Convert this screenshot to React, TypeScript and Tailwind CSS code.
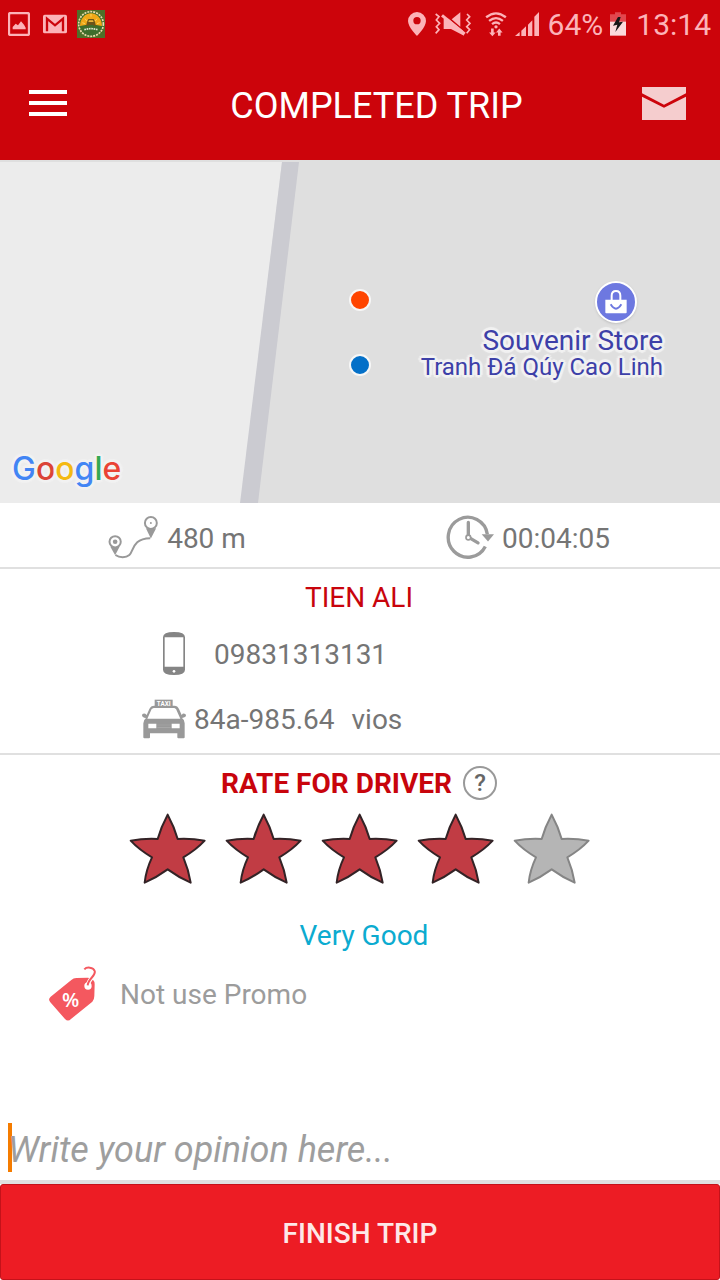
import { useState } from "react";

const RATINGS = ["Bad", "Poor", "Good", "Very Good", "Excellent"];
const HALO =
  "[text-shadow:0_0_3px_#f6f6f6,3px_0_1px_#f1f1f1,-3px_0_1px_#f1f1f1,0_3px_1px_#f1f1f1,0_-3px_1px_#f1f1f1,2px_2px_1px_#f1f1f1,-2px_-2px_1px_#f1f1f1,2px_-2px_1px_#f1f1f1,-2px_2px_1px_#f1f1f1]";

function StatusBar() {
  return (
    <div className="flex h-12 items-center justify-between pr-[9px] pl-2 text-[#fcb3b8]">
      <div className="flex items-center gap-[13px]">
        <svg viewBox="0 0 66 72" className="h-6 w-[22px]" fill="none">
          <rect x="3" y="3" width="60" height="66" rx="5" stroke="currentColor" strokeWidth="7" />
          <path d="M14 52V45l9-10 7 5 9-12 9 10 5 9v5z" fill="currentColor" />
        </svg>
        <svg viewBox="0 0 72 60" className="h-5 w-6">
          <rect y="2" width="72" height="56" rx="5" fill="currentColor" />
          <path d="M12 52V14l24 20 24-20v38" fill="none" stroke="#cc040b" strokeWidth="7" />
        </svg>
        <svg viewBox="0 0 84 84" className="-ml-[3px] h-7 w-7">
          <rect width="84" height="84" fill="#4f7029" />
          <circle cx="42" cy="42" r="37" fill="#3f6d2c" stroke="#ecdcae" strokeWidth="5" strokeDasharray="6 3" />
          <path d="M9 48a33 38 0 0 1 66 0q-33-8-66 0z" fill="#f0a818" />
          <path d="M24 26l6 8M42 12v8M60 26l-6 8M16 38l8 3M68 38l-8 3" stroke="#f8d25c" strokeWidth="3" />
          <path d="M28 44l2-8 4-9h16l4 9 2 8v4h-6v-3H34v3h-6z" fill="#6b541a" />
          <path d="M34 36l2-5h12l2 5z" fill="#e9b63d" />
          <path d="M22 59q20-6 40 0" fill="none" stroke="#dfe5cf" strokeWidth="5" strokeDasharray="5 2" />
        </svg>
      </div>
      <div className="flex items-center">
        <svg viewBox="54 36 54 72" className="h-6 w-[18px]">
          <path
            fillRule="evenodd"
            fill="currentColor"
            d="M81 36a27 27 0 0 1 27 27c0 18-27 45-27 45S54 81 54 63a27 27 0 0 1 27-27zm0 15a11 11 0 1 0 0 22 11 11 0 0 0 0-22z"
          />
        </svg>
        <svg viewBox="135 36 108 72" className="ml-[9px] h-6 w-9" fill="none">
          <path
            d="M137 42l10 8-8 10 10 10-10 10 8 9-10 11M231 42l8 8-9 10 10 10-10 10 9 9-9 11"
            stroke="currentColor"
            strokeWidth="5"
          />
          <path d="M185 58l26-21v43z" fill="currentColor" />
          <path d="M161 56h14l44 36 3 15-39-20h-22z" fill="currentColor" />
          <path d="M156 46l68 56" stroke="currentColor" strokeWidth="9" />
        </svg>
        <svg viewBox="284 34 66 76" className="ml-[14px] h-[25px] w-[22px]" fill="none">
          <path
            d="M287 50q30-24 60 0M296 61q21-17 42 0M305 71q12-10 24 0"
            stroke="currentColor"
            strokeWidth="7"
          />
          <circle cx="317" cy="79" r="5" fill="currentColor" />
          <path d="M302 84h8v12h6l-10 12-10-12h6zM323 106V96h-6l10-12 10 12h-6v10z" fill="currentColor" />
        </svg>
        <svg viewBox="372 36 72 72" className="ml-2 h-6 w-6">
          <path d="M372 108l14-12v12zM391 92l14-13v29h-14zM411 74l13-13v47h-13zM430 50l14-14v72h-14z" fill="currentColor" />
        </svg>
        <span className="ml-[9px] pt-[2px] text-[30px] leading-9">64%</span>
        <svg viewBox="660 38 48 70" className="ml-[7px] h-6 w-4">
          <path d="M660 44h15v-6h18v6h15v24h-48z" fill="#e2474e" />
          <path d="M660 66h48v42h-48z" fill="#fbdadc" />
          <path d="M684 52l-15 26 13-3-6 22 23-31-12 2 5-16z" fill="#161616" />
        </svg>
        <span className="ml-[10px] pt-[2px] text-[30px] leading-9">13:14</span>
      </div>
    </div>
  );
}

function TopBar() {
  return (
    <div className="flex h-28 items-center pr-[34px] pb-[2px] pl-[29px]">
      <button type="button" aria-label="Menu" className="flex w-[38px] flex-col gap-[7px]">
        <span className="h-1 w-full bg-white" />
        <span className="h-1 w-full bg-white" />
        <span className="h-1 w-full bg-white" />
      </button>
      <h1 className="flex-1 pt-[6px] pl-11 text-center text-4xl text-white">COMPLETED TRIP</h1>
      <button type="button" aria-label="Messages">
        <svg viewBox="0 0 132 99" className="h-[33px] w-11">
          <path d="M0 0h132v19L66 53 0 19z" fill="#f5cdce" />
          <path d="M0 29l66 33 66-33v70H0z" fill="#f5cdce" />
        </svg>
      </button>
    </div>
  );
}

function TripMap() {
  return (
    <section aria-label="Map" className="relative h-[343px] overflow-hidden bg-[#dfdfdf]">
      <svg viewBox="0 0 720 343" preserveAspectRatio="none" className="absolute inset-0 h-full w-full">
        <path d="M0 2h282l-41 341H0z" fill="#ececec" />
        <path d="M282 2h17l-41 341h-18z" fill="#cbcbd1" />
      </svg>
      <span className="absolute top-[129px] left-1/2 size-[22px] -translate-x-1/2 rounded-full border-2 border-[#f7f7f7] bg-[#ff4500]" />
      <span className="absolute top-[194px] left-1/2 size-[22px] -translate-x-1/2 rounded-full border-2 border-[#f7f7f7] bg-[#0470c8]" />
      <div className="absolute top-[121px] right-[57px] flex flex-col items-end text-[#3d40a8]">
        <span className="mr-[26px] flex size-[42px] items-center justify-center rounded-full border-2 border-white bg-[#6d78e0] shadow-sm">
          <svg viewBox="0 0 66 70" className="h-6 w-[22px]">
            <path d="M1 28h64v38q0 3-3 3H4q-3 0-3-3z" fill="#fff" />
            <path d="M20 30V16q0-14 13-14t13 14v14" fill="none" stroke="#fff" strokeWidth="6" />
            <path d="M17 42q16 26 32 0" fill="none" stroke="#6d78e0" strokeWidth="6" />
          </svg>
        </span>
        <span className={`mt-1 text-[28px] leading-7 ${HALO}`}>Souvenir Store</span>
        <span className={`text-2xl leading-6 ${HALO}`}>Tranh Đá Qúy Cao Linh</span>
      </div>
      <span className={`absolute bottom-[14px] left-3 font-[Inter,sans-serif] text-[32px] leading-10 font-medium ${HALO}`}>
        <span className="text-[#4285f4]">G</span>
        <span className="text-[#db4437]">o</span>
        <span className="text-[#f4b912]">o</span>
        <span className="text-[#4285f4]">g</span>
        <span className="text-[#34a853]">l</span>
        <span className="text-[#ea4335]">e</span>
      </span>
    </section>
  );
}

function TripStats() {
  return (
    <section className="grid h-[66px] grid-cols-2 border-b-2 border-[#e0e0e0] pt-1">
      <div className="flex items-center justify-center gap-[9px] pr-[6px]">
        <svg viewBox="324 256 150 130" className="h-[43px] w-[50px]" fill="none">
          <path d="M346 374c12 9 32 9 42 0 14-12 8-50 63-51" stroke="#999" strokeWidth="6" />
          <circle cx="345" cy="334" r="17" stroke="#999" strokeWidth="6" />
          <circle cx="345" cy="334" r="7" fill="#999" />
          <path d="M331 350h27l-13 25z" fill="#999" />
          <circle cx="453" cy="277" r="18" stroke="#999" strokeWidth="6" />
          <circle cx="453" cy="277" r="3" fill="#999" />
          <path d="M438 293h31l-16 31z" fill="#999" />
        </svg>
        <span className="pt-1">480 m</span>
      </div>
      <div className="flex items-center justify-center gap-2 pr-6">
        <svg viewBox="138 74 144 134" className="h-[45px] w-12" fill="none">
          <path d="M262 131a59 60 0 1 0-6 37" stroke="#9b9b9b" strokeWidth="10" />
          <path d="M245 131h37l-18 22z" fill="#9b9b9b" />
          <path d="M205 96v44l29 17" stroke="#9b9b9b" strokeWidth="10" strokeLinecap="round" />
          <circle cx="205" cy="141" r="7" fill="#fff" stroke="#9b9b9b" strokeWidth="5" />
        </svg>
        <span className="pt-1">00:04:05</span>
      </div>
    </section>
  );
}

function Driver() {
  return (
    <section className="h-[186px] border-b-2 border-[#e0e0e0]">
      <h2 className="flex h-14 items-center justify-center pt-[2px] pr-[2px] text-[#c8040c]">TIEN ALI</h2>
      <div className="flex h-14 items-center pl-[163px]">
        <svg viewBox="219 184 66 129" className="h-[43px] w-[22px]">
          <path
            fillRule="evenodd"
            fill="#858585"
            d="M219 200q0-16 33-16t33 16v97q0 16-33 16t-33-16zM224 200v88h56v-88z"
          />
          <circle cx="252" cy="302" r="4" fill="#fff" />
        </svg>
        <span className="pt-1 pl-[29px]">09831313131</span>
      </div>
      <div className="flex h-[72px] items-center gap-2 pt-[3px] pl-[142px]">
        <svg viewBox="156 384 132 120" className="h-10 w-11">
          <path d="M194 386h54v22h-54z" fill="#999" />
          <path
            fillRule="evenodd"
            fill="#999"
            d="M190 404h63q10 0 14 10l8 18 3-4q10-1 10 5t-12 8q8 5 8 16v42q0 3-3 3h-16q-3 0-3-3v-12h-82v12q0 3-3 3h-14q-3 0-3-3v-42q0-10 8-16-12-1-12-8t10-5l4 4 8-18q4-10 15-10zm1 7-6 3-13 29h99l-13-29-5-3zM175 458v14h24v-14zM245 458v14h24v-14z"
          />
          <path d="M202 461h40v2h-40zM202 468h40v2h-40z" fill="#adadad" />
          <text x="221" y="404" textAnchor="middle" fontSize="19" fontWeight="700" fill="#fff">
            TAXI
          </text>
        </svg>
        <span className="pt-[2px]">84a-985.64</span>
        <span className="pt-[2px] pl-[9px]">vios</span>
      </div>
    </section>
  );
}

function Rating() {
  const [rating, setRating] = useState(4);
  return (
    <section>
      <div className="flex h-14 items-center justify-center gap-[11px] pr-[2px] pb-px">
        <h2 className="pt-[2px] font-bold text-[#c8040c]">RATE FOR DRIVER</h2>
        <button
          type="button"
          aria-label="About rating"
          className="flex size-[34px] items-center justify-center rounded-full border-2 border-[#999] text-2xl leading-6 font-medium text-[#666]"
        >
          ?
        </button>
      </div>
      <div role="radiogroup" aria-label="Rate for driver" className="flex justify-center">
        {RATINGS.map((name, i) => (
          <label key={name} className="relative w-24 cursor-pointer">
            <input
              type="radio"
              name="rating"
              aria-label={name}
              checked={rating === i + 1}
              onChange={() => setRating(i + 1)}
              className="absolute inset-0 h-full w-full opacity-0"
            />
            <svg
              viewBox="29 168 288 240"
              className={i < rating ? "h-20 w-24 fill-[#c13c44] stroke-[#332326]" : "h-20 w-24 fill-[#b5b5b5] stroke-[#858585]"}
            >
              <path
                strokeWidth="6"
                strokeLinejoin="round"
                d="M172 179Q192 216 202 252Q244 250 283 257Q258 284 219 307Q235 345 241 383Q205 367 172 343Q139 367 103 383Q107 345 125 307Q86 284 61 257Q100 250 142 252Q152 216 172 179z"
              />
            </svg>
          </label>
        ))}
      </div>
      <p className="pt-[27px] pl-2 text-center text-[#0cabd0]">{RATINGS[rating - 1]}</p>
    </section>
  );
}

function Promo() {
  return (
    <button type="button" className="mt-1 flex h-[72px] items-center gap-6 self-start pl-12 text-[#9c9c9c]">
      <svg viewBox="54 46 144 168" className="h-14 w-12">
        <path
          d="M62 138l62-50q6-6 15-6l34-1q20 0 21 20l-1 35q0 10-6 17l-64 52q-9 9-18 0l-44-50q-8-9 1-17z"
          fill="#f4585f"
        />
        <circle cx="174" cy="106" r="11" fill="#fff" />
        <path d="M194 62c5 14-19 22-20 42" fill="none" stroke="#fff" strokeWidth="12" />
        <path d="M163 56c7-8 27-7 31 5 5 14-20 23-21 43" fill="none" stroke="#f4585f" strokeWidth="6" />
        <text x="122" y="168" textAnchor="middle" fontSize="60" fontWeight="600" className="font-[Open_Sans,sans-serif]" fill="#fff">
          %
        </text>
      </svg>
      <span className="pt-px">Not use Promo</span>
    </button>
  );
}

export default function App() {
  return (
    <main className="flex min-h-screen flex-col bg-white font-[Roboto,sans-serif] text-[28px] leading-9 text-[#757575]">
      <header className="bg-[#cc040b]">
        <StatusBar />
        <TopBar />
      </header>
      <TripMap />
      <TripStats />
      <Driver />
      <Rating />
      <Promo />
      <form className="mt-auto flex flex-col" onSubmit={(e) => e.preventDefault()}>
        <div className="relative border-b-4 border-[#e0e0e0] px-2 pb-2">
          <span className="absolute top-0 left-2 h-[49px] w-1 bg-[#f57c00]" />
          <input
            type="text"
            aria-label="Your opinion"
            placeholder="Write your opinion here..."
            className="relative block h-[49px] w-full bg-transparent pt-1 text-4xl italic outline-none placeholder:text-[#9e9e9e]"
          />
        </div>
        <button
          type="submit"
          className="h-24 rounded-[3px] border border-[#c4121a] bg-[#ed1c24] pt-1 font-medium text-[#fde8e8]"
        >
          FINISH TRIP
        </button>
      </form>
    </main>
  );
}
